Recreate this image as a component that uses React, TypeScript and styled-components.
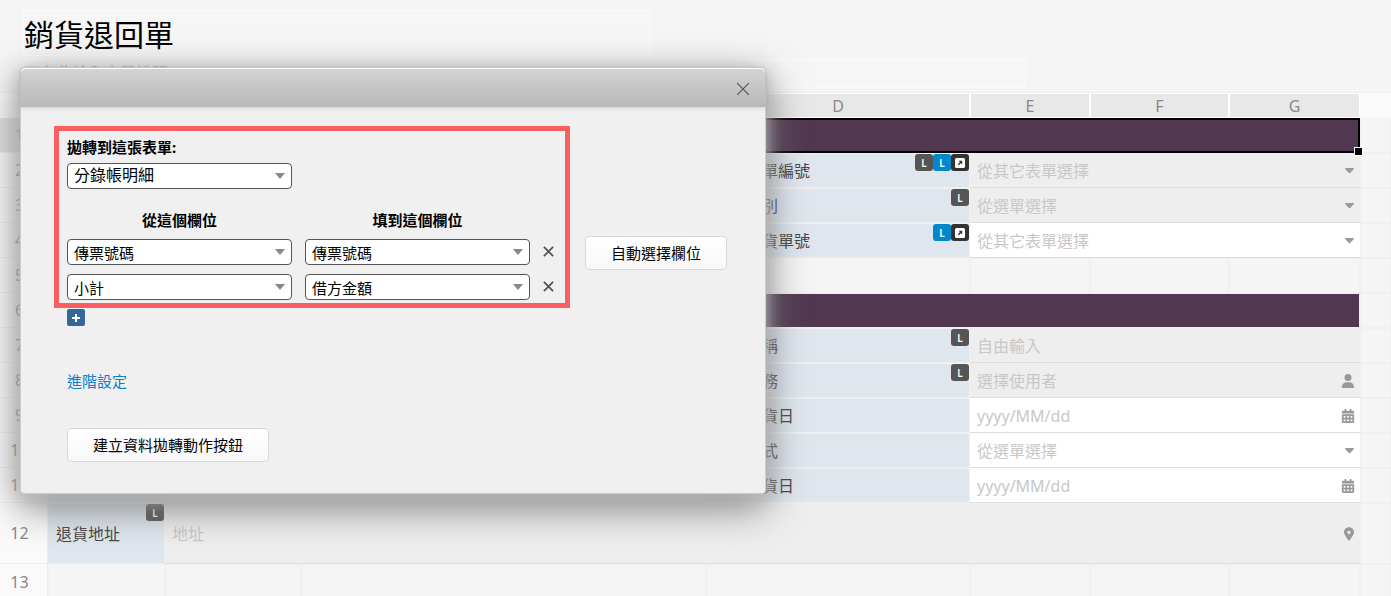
import React from 'react';
import styled, { createGlobalStyle, css } from 'styled-components';
import { FaCalendarAlt } from 'react-icons/fa';
import { FaUser } from 'react-icons/fa6';

const GlobalStyle = createGlobalStyle`
  * { box-sizing: border-box; }
  html, body, #root { height: 100%; }
  body {
    margin: 0;
    overflow: hidden;
    background: #f5f5f5;
    color: #000;
    font-family: "Noto Sans", "Noto Sans CJK TC", sans-serif;
    font-size: 15px;
  }
  button, input, select { font-family: inherit; }
`;

const Page = styled.div`
  position: relative;
  min-height: 100%;
`;

const FormHeader = styled.header`
  display: flex;
  flex-direction: column;
  align-items: flex-start;
  gap: 3px;
  height: 92px;
  padding: 10px 0 0 23px;
`;

const TitleInput = styled.input`
  width: 628px;
  max-width: 100%;
  height: 46px;
  padding: 0;
  border: 1px solid #fafafa;
  background: #f6f6f6;
  font-size: 30px;
  outline: 0;
`;

const DescriptionInput = styled.input`
  width: 1003px;
  max-width: 100%;
  height: 29px;
  padding: 0 0 2px;
  border: 1px solid #fafafa;
  background: #f6f6f6;
  font-size: 16px;
  outline: 0;
  &::placeholder { color: #aaa; }
`;

const Sheet = styled.table`
  width: 100%;
  table-layout: fixed;
  border-collapse: separate;
  border-spacing: 0;
  border-top: 1px solid #eee;
  line-height: 20px;
  color: #444;
  font-size: 16px;
  td, th { padding: 0; font-weight: 400; }
`;

const Col = styled.col<{ $w?: number }>`
  ${p => p.$w && `width: ${p.$w}px;`}
`;

const HeadCell = styled.th`
  height: 25px;
  border: 1px solid #fff;
  background: #e8e8e8;
  color: #888;
`;

const HeadBlank = styled.td`
  background: #fafafa;
`;

const RowHead = styled.th<{ $selected?: boolean }>`
  border: solid #eee;
  border-width: 0 1px 1px 0;
  background: ${p => (p.$selected ? '#e0e0e0' : '#fafafa')};
  color: #888;
  && { padding-right: 8px; }
`;

const Cell = styled.td`
  border: 1px solid #f0f0f0;
`;

const BandCell = styled(Cell)<{ $selected?: boolean }>`
  position: relative;
  background: #513850;
  ${p => p.$selected && css`
    border: 2px solid #000;
    &::after {
      content: '';
      position: absolute;
      right: -5px;
      bottom: -5px;
      width: 7px;
      height: 7px;
      border: 1px solid #fff;
      background: #000;
    }
  `}
`;

const LabelCell = styled(Cell)`
  position: relative;
  border-left: 0;
  background: #dfe6ee;
  && { padding-left: 8px; }
`;

const Badges = styled.span`
  position: absolute;
  top: 0;
  right: 0;
  display: flex;
`;

const Badge = styled.span<{ $color: string }>`
  display: flex;
  align-items: center;
  justify-content: center;
  width: 18px;
  height: 17px;
  border-radius: 3px;
  background: ${p => p.$color};
  color: #fff;
  font-size: 10px;
  font-weight: 600;
`;

const FieldCell = styled.td<{ $locked?: boolean }>`
  border-bottom: 1px solid #ddd;
  background: ${p => (p.$locked ? '#eee' : '#fff')};
`;

const Field = styled.div`
  display: flex;
  align-items: center;
  padding: 1px 6px 0 7px;
  color: #999;
`;

const FieldInput = styled.input`
  flex: 1;
  min-width: 0;
  height: 24px;
  padding: 0;
  border: 0;
  background: transparent;
  font-size: 16px;
  outline: 0;
  &::placeholder { color: #c8c8c8; opacity: 1; }
`;

const FieldIcon = styled.span`
  display: flex;
  justify-content: flex-end;
  width: 12px;
  svg { flex: none; }
`;

const Row = styled.tr<{ $h: number }>`
  height: ${p => p.$h}px;
`;

const Dialog = styled.section`
  position: absolute;
  top: 67px;
  left: 20px;
  width: 746px;
  border: 1px solid #ccc;
  border-radius: 6px 6px 4px 4px;
  background: #f0f0f0;
  box-shadow: 0 4px 16px #bbb, 0 12px 40px #777;
  line-height: 20px;
`;

const DialogBar = styled.header`
  display: flex;
  align-items: center;
  justify-content: flex-end;
  height: 39px;
  padding: 3px 15px 0 0;
  border-radius: 5px 5px 0 0;
  background: linear-gradient(#d4d4d4, #b8b8b8);
  box-shadow: inset 0 1px #fff, 0 1px 4px rgba(0, 0, 0, 0.15);
`;

const IconButton = styled.button`
  display: flex;
  align-items: center;
  justify-content: center;
  padding: 0;
  border: 0;
  background: none;
  color: #555;
  cursor: pointer;
`;

const DialogBody = styled.div`
  padding: 19px 33px 31px;
`;

const MappingRow = styled.div`
  display: flex;
  align-items: flex-end;
  gap: 15px;
`;

const MappingBox = styled.div`
  flex: none;
  padding: 6px 0 3px 8px;
  border: 5px solid #fb5e5e;
`;

const TargetLabel = styled.label`
  display: block;
  margin-bottom: 6px;
  font-weight: 700;
`;

const FieldPair = styled.div`
  display: grid;
  grid-template-columns: 225px 225px 35px;
  column-gap: 13px;
  width: 498px;
  margin-top: 9px;
`;

const PairHeadings = styled(FieldPair)`
  margin-top: 21px;
  text-align: center;
  font-weight: 700;
`;

const SelectWrap = styled.div`
  position: relative;
  width: 225px;
  height: 26px;
`;

const Select = styled.select<{ $large?: boolean }>`
  width: 100%;
  height: 26px;
  padding: ${p => (p.$large ? '0 24px 2px 6px' : '1px 24px 0 6px')};
  border: 1px solid #555;
  border-radius: 4px;
  background: #fff;
  color: #000;
  font-size: ${p => (p.$large ? 16 : 15)}px;
  appearance: none;
`;

const SelectArrow = styled.svg`
  position: absolute;
  top: 10px;
  right: 7px;
  width: 10px;
  height: 6px;
  fill: #888;
  pointer-events: none;
`;

const RemoveButton = styled(IconButton)`
  width: 36px;
  height: 25px;
  margin-left: -13px;
`;

const PushButton = styled.button`
  height: 34px;
  padding: 0 25px 2px;
  border: 1px solid #d8d8d8;
  border-radius: 4px;
  background: linear-gradient(#fff, #f8f8f8);
  color: #000;
  font-size: 15px;
  white-space: nowrap;
  cursor: pointer;
`;

const AutoButton = styled(PushButton)`
  margin-bottom: 38px;
`;

const AddButton = styled(IconButton)`
  width: 18px;
  height: 17px;
  margin: 1px 0 0 13px;
  border-radius: 2px;
  background: #336699;
  color: #fff;
`;

const DialogFooter = styled.footer`
  display: flex;
  flex-direction: column;
  align-items: flex-start;
  gap: 37px;
  margin: 45px 0 0 13px;
`;

const SettingsLink = styled.a`
  color: #0a7fd0;
  text-decoration: none;
`;

type BadgeKind = 'lock' | 'link' | 'jump';
type FieldKind = 'text' | 'menu' | 'user' | 'date' | 'place';

const CaretIcon = () => (
  <svg width={9} height={6} viewBox="0 0 9 6" fill="currentColor">
    <path d="M.8 0h7.4c.7 0 1 .8.5 1.3L5.1 4.9c-.3.3-.9.3-1.2 0L.3 1.3C-.2.8.1 0 .8 0z" />
  </svg>
);

const PinIcon = () => (
  <svg width={10} height={14} viewBox="0 0 384 512" fill="currentColor">
    <path d="M215.7 499.2C267 435 384 279.4 384 192C384 86 298 0 192 0S0 86 0 192c0 87.4 117 243 168.3 307.2c12.3 15.3 35.1 15.3 47.4 0zM192 128a64 64 0 1 1 0 128a64 64 0 1 1 0-128z" />
  </svg>
);

const JumpIcon = () => (
  <svg width={10} height={10} viewBox="0 0 10 10">
    <rect width={10} height={10} rx={1.5} fill="#fff" />
    <path d="M3.3 6.7L6 4" stroke="#333" strokeWidth={1.5} />
    <path d="M3.6 2.8h3.6v3.6z" fill="#333" />
  </svg>
);

const icons: Record<FieldKind, React.ReactNode> = {
  text: null,
  menu: <CaretIcon />,
  user: <FaUser size={14} />,
  date: <FaCalendarAlt size={14} />,
  place: <PinIcon />,
};

const iconShift: Record<FieldKind, number> = { text: 0, menu: 0, user: 1, date: 1, place: 0 };

const ShiftedIcon = styled(FieldIcon)<{ $overhang: number }>`
  margin-right: ${p => -p.$overhang}px;
`;

const badgeColors: Record<BadgeKind, string> = { lock: '#555', link: '#0088cc', jump: '#333' };

const BadgeList = ({ items }: { items: BadgeKind[] }) => (
  <Badges>
    {items.map(kind => (
      <Badge key={kind} $color={badgeColors[kind]}>
        {kind === 'jump' ? <JumpIcon /> : 'L'}
      </Badge>
    ))}
  </Badges>
);

interface FormField {
  label: string;
  badges: BadgeKind[];
  hint: string;
  kind: FieldKind;
  locked?: boolean;
}

const rows: (FormField | 'band' | 'empty')[] = [
  'band',
  { label: '銷退貨單編號', badges: ['lock', 'link', 'jump'], hint: '從其它表單選擇', kind: 'menu', locked: true },
  { label: '課稅類別', badges: ['lock'], hint: '從選單選擇', kind: 'menu', locked: true },
  { label: '原始銷貨單號', badges: ['link', 'jump'], hint: '從其它表單選擇', kind: 'menu' },
  'empty',
  'band',
  { label: '客戶名稱', badges: ['lock'], hint: '自由輸入', kind: 'text', locked: true },
  { label: '負責業務', badges: ['lock'], hint: '選擇使用者', kind: 'user', locked: true },
  { label: '預計退貨日', badges: [], hint: 'yyyy/MM/dd', kind: 'date' },
  { label: '退款方式', badges: [], hint: '從選單選擇', kind: 'menu' },
  { label: '實際退貨日', badges: [], hint: 'yyyy/MM/dd', kind: 'date' },
];

const FieldBox = ({ id, hint, kind, label }: { id: string; hint: string; kind: FieldKind; label: string }) => (
  <Field>
    <FieldInput id={id} aria-label={label} placeholder={hint} />
    <ShiftedIcon $overhang={iconShift[kind]}>{icons[kind]}</ShiftedIcon>
  </Field>
);

const EmptyCells = ({ count }: { count: number }) => (
  <>{Array.from({ length: count }, (_, i) => <Cell key={i} />)}</>
);

const DropDown = ({ id, value, label, large }: { id: string; value: string; label?: string; large?: boolean }) => (
  <SelectWrap>
    <Select id={id} aria-label={label} $large={large} defaultValue={value}>
      <option>{value}</option>
    </Select>
    <SelectArrow viewBox="0 0 10 6"><path d="M0 0h10L5 6z" /></SelectArrow>
  </SelectWrap>
);

const Cross = ({ size, width }: { size: number; width: number }) => (
  <svg width={size} height={size} viewBox="0 0 12 12" fill="none" stroke="currentColor" strokeWidth={width}>
    <path d="M1 1l10 10M11 1L1 11" />
  </svg>
);

const PlusIcon = () => (
  <svg width={10} height={10} viewBox="0 0 10 10" fill="none" stroke="currentColor" strokeWidth={2}>
    <path d="M5 1v8M1 5h8" />
  </svg>
);

const pairs = [['傳票號碼', '傳票號碼'], ['小計', '借方金額']];

export default function App() {
  return (
    <Page>
      <GlobalStyle />
      <FormHeader>
        <TitleInput aria-label="表單名稱" defaultValue="銷貨退回單" />
        <DescriptionInput aria-label="表單說明" placeholder="可在此輸入表單說明" />
      </FormHeader>

      <Sheet>
        <colgroup>
          {[48, 117, 136, 405, 264, 120, 139, 131].map((w, i) => <Col key={i} $w={w} />)}
          <Col />
        </colgroup>
        <thead>
          <Row $h={25}>
            <HeadBlank />
            {['A', 'B', 'C', 'D', 'E', 'F', 'G'].map(c => <HeadCell key={c} scope="col">{c}</HeadCell>)}
            <HeadBlank />
          </Row>
        </thead>
        <tbody>
          {rows.map((row, i) => (
            <Row key={i} $h={35}>
              <RowHead scope="row" $selected={i === 0}>{i + 1}</RowHead>
              {row === 'band' && <BandCell colSpan={7} $selected={i === 0} />}
              {row === 'empty' && <EmptyCells count={7} />}
              {typeof row === 'object' && (
                <>
                  <LabelCell />
                  <FieldCell colSpan={2} $locked />
                  <LabelCell>
                    <label htmlFor={`field-${i}`}>{row.label}</label>
                    <BadgeList items={row.badges} />
                  </LabelCell>
                  <FieldCell colSpan={3} $locked={row.locked}>
                    <FieldBox id={`field-${i}`} label={row.label} hint={row.hint} kind={row.kind} />
                  </FieldCell>
                </>
              )}
              <Cell />
            </Row>
          ))}
          <Row $h={61}>
            <RowHead scope="row">12</RowHead>
            <LabelCell>
              <label htmlFor="field-address">退貨地址</label>
              <BadgeList items={['lock']} />
            </LabelCell>
            <FieldCell colSpan={6} $locked>
              <FieldBox id="field-address" label="退貨地址" hint="地址" kind="place" />
            </FieldCell>
            <Cell />
          </Row>
          <Row $h={37}>
            <RowHead scope="row">13</RowHead>
            <EmptyCells count={8} />
          </Row>
        </tbody>
      </Sheet>

      <Dialog role="dialog" aria-label="資料拋轉">
        <DialogBar>
          <IconButton aria-label="關閉"><Cross size={14} width={1} /></IconButton>
        </DialogBar>
        <DialogBody>
          <MappingRow>
            <MappingBox>
              <TargetLabel htmlFor="target-form">拋轉到這張表單:</TargetLabel>
              <DropDown id="target-form" value="分錄帳明細" large />
              <PairHeadings>
                <span>從這個欄位</span>
                <span>填到這個欄位</span>
              </PairHeadings>
              {pairs.map(([from, to], i) => (
                <FieldPair key={i}>
                  <DropDown id={`from-${i}`} label="從這個欄位" value={from} />
                  <DropDown id={`to-${i}`} label="填到這個欄位" value={to} />
                  <RemoveButton aria-label="移除"><Cross size={11} width={2} /></RemoveButton>
                </FieldPair>
              ))}
            </MappingBox>
            <AutoButton>自動選擇欄位</AutoButton>
          </MappingRow>
          <AddButton aria-label="新增欄位"><PlusIcon /></AddButton>
          <DialogFooter>
            <SettingsLink href="#advanced">進階設定</SettingsLink>
            <PushButton>建立資料拋轉動作按鈕</PushButton>
          </DialogFooter>
        </DialogBody>
      </Dialog>
    </Page>
  );
}
